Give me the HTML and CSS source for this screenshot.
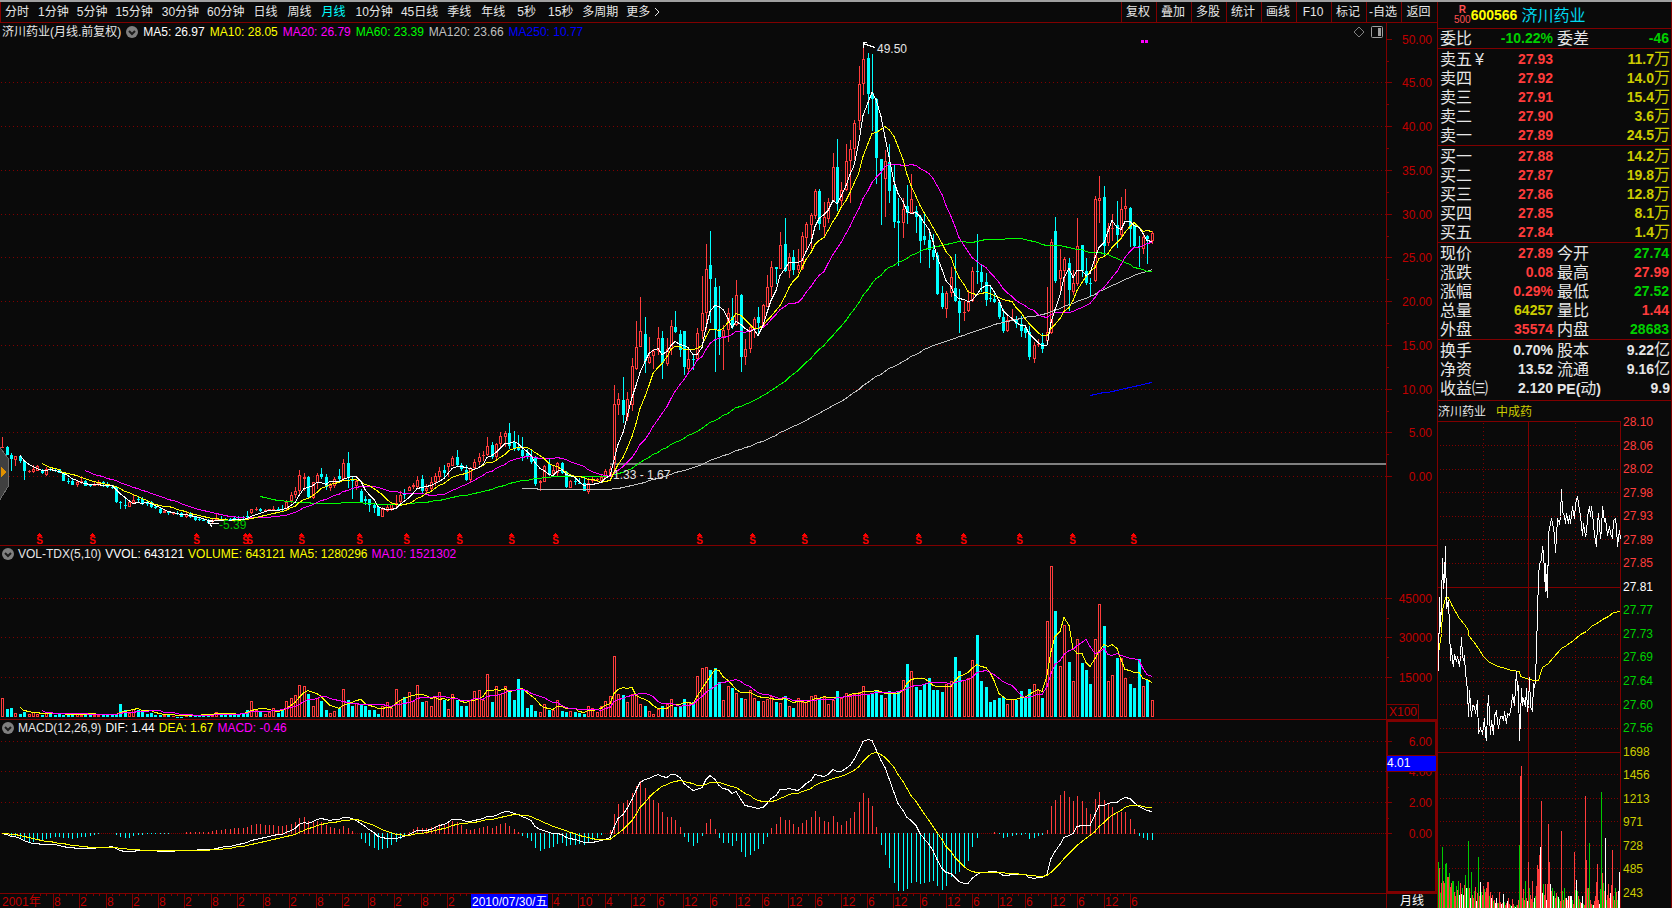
FILE: index.html
```html
<!DOCTYPE html>
<html lang="zh-CN">
<head>
<meta charset="utf-8">
<title>济川药业 600566 月线</title>
<link rel="stylesheet" href="styles.css">
</head>
<body>
<div class="app">
  <main class="main">
    <header class="toolbar">
      <nav class="periods" aria-label="周期">
        <button class="tab">分时</button>
        <button class="tab tab-tight">1分钟</button>
        <button class="tab tab-tight">5分钟</button>
        <button class="tab tab-tight">15分钟</button>
        <button class="tab tab-mid">30分钟</button>
        <button class="tab tab-tight">60分钟</button>
        <button class="tab">日线</button>
        <button class="tab">周线</button>
        <button class="tab tab-active">月线</button>
        <button class="tab tab-mid">10分钟</button>
        <button class="tab tab-tight">45日线</button>
        <button class="tab">季线</button>
        <button class="tab">年线</button>
        <button class="tab tab-wide">5秒</button>
        <button class="tab">15秒</button>
        <button class="tab tab-tight">多周期</button>
        <button class="tab tab-tight tab-more">更多
          <svg width="6" height="10" viewBox="0 0 6 10"><path d="M1 1l4 4-4 4" fill="none" stroke="currentColor"/></svg>
        </button>
      </nav>
      <nav class="tools" aria-label="工具">
        <button class="tool">复权</button>
        <button class="tool">叠加</button>
        <button class="tool">多股</button>
        <button class="tool">统计</button>
        <button class="tool">画线</button>
        <button class="tool">F10</button>
        <button class="tool">标记</button>
        <button class="tool">-自选</button>
        <button class="tool tool-last">返回</button>
      </nav>
    </header>

    <section class="pane pane-price">
      <svg class="plot" id="price" viewBox="0 23 1386 522" preserveAspectRatio="none"></svg>
      <svg class="scale" id="price-scale" viewBox="1386 23 51 522" preserveAspectRatio="none"></svg>
      <div class="legend">
        <span>济川药业(月线.前复权)</span>
        <button class="fold" aria-label="指标"><svg width="12" height="12" viewBox="0 0 12 12"><circle cx="6" cy="6" r="6" fill="#808080"/><path d="M3 5l3 3 3-3" fill="none" stroke="#1c1c1c" stroke-width="2"/></svg></button>
        <span class="white">MA5: 26.97</span>
        <span class="yellow">MA10: 28.05</span>
        <span class="magenta">MA20: 26.79</span>
        <span class="lime">MA60: 23.39</span>
        <span class="silver">MA120: 23.66</span>
        <span class="blue">MA250: 10.77</span>
      </div>
      <div class="pane-tools">
        <svg width="12" height="12" viewBox="0 0 12 12"><path d="M6 1l5 5-5 5-5-5z" fill="none" stroke="#808080"/></svg>
        <svg width="12" height="12" viewBox="0 0 12 12"><rect x=".5" y=".5" width="11" height="11" rx="1" fill="none" stroke="#a0a0a0"/><path d="M7 2h3v8H7z" fill="#a0a0a0"/></svg>
      </div>
    </section>

    <section class="pane pane-sub">
      <svg class="plot" id="volume" viewBox="0 546 1386 173" preserveAspectRatio="none"></svg>
      <svg class="scale" id="volume-scale" viewBox="1386 546 51 173" preserveAspectRatio="none"></svg>
      <div class="legend legend-sub">
        <button class="fold" aria-label="指标"><svg width="12" height="12" viewBox="0 0 12 12"><circle cx="6" cy="6" r="6" fill="#808080"/><path d="M3 5l3 3 3-3" fill="none" stroke="#1c1c1c" stroke-width="2"/></svg></button>
        <span>VOL-TDX(5,10)</span>
        <span class="white">VVOL: 643121</span>
        <span class="yellow">VOLUME: 643121</span>
        <span class="yellow">MA5: 1280296</span>
        <span class="magenta">MA10: 1521302</span>
      </div>
    </section>

    <section class="pane pane-sub">
      <svg class="plot" id="macd" viewBox="0 720 1386 173" preserveAspectRatio="none"></svg>
      <svg class="scale" id="macd-scale" viewBox="1386 720 51 173" preserveAspectRatio="none"></svg>
      <div class="legend legend-sub">
        <button class="fold" aria-label="指标"><svg width="12" height="12" viewBox="0 0 12 12"><circle cx="6" cy="6" r="6" fill="#808080"/><path d="M3 5l3 3 3-3" fill="none" stroke="#1c1c1c" stroke-width="2"/></svg></button>
        <span>MACD(12,26,9)</span>
        <span class="white">DIF: 1.44</span>
        <span class="yellow">DEA: 1.67</span>
        <span class="magenta">MACD: -0.46</span>
      </div>
    </section>

    <footer class="timeline">
      <svg class="plot" id="dates" viewBox="0 894 1386 14" preserveAspectRatio="none"></svg>
      <div class="cycle">月线</div>
    </footer>
  </main>

  <aside class="quote">
    <h1 class="title">
      <span class="badge"><b>R</b><span>500</span></span>
      <span class="code">600566</span>
      <span class="name">济川药业</span>
    </h1>
    <dl class="rows rows-single">
      <div class="cell"><dt>委比</dt><dd class="green">-10.22%</dd></div><div class="cell"><dt>委差</dt><dd class="green">-46</dd></div>
    </dl>
    <table class="book">
      <tbody>
        <tr><th>卖五<span class="yen">¥</span></th><td class="red">27.93</td><td class="lots">11.7<i>万</i></td></tr>
        <tr><th>卖四</th><td class="red">27.92</td><td class="lots">14.0<i>万</i></td></tr>
        <tr><th>卖三</th><td class="red">27.91</td><td class="lots">15.4<i>万</i></td></tr>
        <tr><th>卖二</th><td class="red">27.90</td><td class="lots">3.6<i>万</i></td></tr>
        <tr><th>卖一</th><td class="red">27.89</td><td class="lots">24.5<i>万</i></td></tr>
      </tbody>
    </table>
    <table class="book">
      <tbody>
        <tr><th>买一</th><td class="red">27.88</td><td class="lots">14.2<i>万</i></td></tr>
        <tr><th>买二</th><td class="red">27.87</td><td class="lots">19.8<i>万</i></td></tr>
        <tr><th>买三</th><td class="red">27.86</td><td class="lots">12.8<i>万</i></td></tr>
        <tr><th>买四</th><td class="red">27.85</td><td class="lots">8.1<i>万</i></td></tr>
        <tr><th>买五</th><td class="red">27.84</td><td class="lots">1.4<i>万</i></td></tr>
      </tbody>
    </table>
    <dl class="rows">
      <div class="cell"><dt>现价</dt><dd class="red">27.89</dd></div><div class="cell"><dt>今开</dt><dd class="green">27.74</dd></div>
      <div class="cell"><dt>涨跌</dt><dd class="red">0.08</dd></div><div class="cell"><dt>最高</dt><dd class="red">27.99</dd></div>
      <div class="cell"><dt>涨幅</dt><dd class="red">0.29%</dd></div><div class="cell"><dt>最低</dt><dd class="green">27.52</dd></div>
      <div class="cell"><dt>总量</dt><dd class="gold">64257</dd></div><div class="cell"><dt>量比</dt><dd class="red">1.44</dd></div>
      <div class="cell"><dt>外盘</dt><dd class="red">35574</dd></div><div class="cell"><dt>内盘</dt><dd class="green">28683</dd></div>
    </dl>
    <dl class="rows rows-last">
      <div class="cell"><dt>换手</dt><dd>0.70%</dd></div><div class="cell"><dt>股本</dt><dd>9.22<i>亿</i></dd></div>
      <div class="cell"><dt>净资</dt><dd>13.52</dd></div><div class="cell"><dt>流通</dt><dd>9.16<i>亿</i></dd></div>
      <div class="cell"><dt>收益㈢</dt><dd>2.120</dd></div><div class="cell"><dt><b class="pe">PE(</b>动<b class="pe">)</b></dt><dd>9.9</dd></div>
    </dl>
    <section class="intraday">
      <div class="intraday-head"><span>济川药业</span><span class="gold">中成药</span></div>
      <svg class="intraday-plot" id="intraday" viewBox="1438 421 183 487" preserveAspectRatio="none"></svg>
      <ol class="intraday-scale">
        <li class="red">28.10</li><li class="red">28.06</li><li class="red">28.02</li><li class="red">27.98</li><li class="red">27.93</li><li class="red">27.89</li><li class="red">27.85</li>
        <li class="white">27.81</li>
        <li class="green">27.77</li><li class="green">27.73</li><li class="green">27.69</li><li class="green">27.64</li><li class="green">27.60</li><li class="green">27.56</li>
        <li class="gold">1698</li><li class="gold">1456</li><li class="gold">1213</li><li class="gold">971</li><li class="gold">728</li><li class="gold">485</li><li class="gold">243</li>
      </ol>
    </section>
  </aside>
</div>
<script src="chart.js"></script>
</body>
</html>
```
FILE: styles.css
```css
* { box-sizing: border-box; }

body {
  margin: 0;
  background: #0a0a0a;
  color: #e6e6e6;
  font: 12px/14px "Liberation Sans", "Noto Sans CJK SC", sans-serif;
  overflow: hidden;
}

button {
  margin: 0;
  border: 0;
  background: none;
  color: inherit;
  font: inherit;
  white-space: nowrap;
}

.app {
  display: grid;
  grid-template-columns: minmax(0, 1fr) 235px;
  height: 100vh;
  border-top: 2px solid #a0a0a0;
}

.main { display: flex; flex-direction: column; min-width: 0; }

.toolbar {
  display: flex;
  justify-content: space-between;
  height: 21px;
  border-left: 1px solid #800000;
  border-bottom: 1px solid #800000;
}
.periods, .tools { display: flex; }
.tab { padding: 0 5px; }
.tab:first-child { padding-left: 4px; }
.tab-tight { padding: 0 4px; }
.tab-mid { padding: 0 4px 0 5px; }
.tab-wide { padding: 0 7px; }
.tab-active { color: #00ffff; }
.tab-more { display: flex; align-items: center; gap: 4px; }
.tool { width: 35px; padding: 0 2px 0 0; border-left: 1px solid #800000; }
.tool-last { width: 36px; }

.pane {
  position: relative;
  display: flex;
  min-height: 0;
  border-bottom: 1px solid #800000;
}
.pane-price { flex: 522 1 0; }
.pane-sub { flex: 173 1 0; }
.plot { display: block; flex: 1; min-width: 0; height: 100%; }
.scale { display: block; width: 51px; height: 100%; }

.legend {
  position: absolute;
  top: 2px;
  left: 2px;
  display: flex;
  align-items: center;
  gap: 5px;
  white-space: nowrap;
}
.legend-sub { top: 1px; gap: 4px; }
.fold { display: flex; padding: 0; }
.pane-tools {
  position: absolute;
  top: 3px;
  right: 54px;
  display: flex;
  gap: 6px;
}

.timeline { display: flex; height: 14px; }
.cycle {
  width: 51px;
  border-left: 1px solid #800000;
  color: #ffffff;
  text-align: center;
}

.white { color: #ffffff; }
.yellow { color: #ffff00; }
.magenta { color: #ff00ff; }
.lime { color: #00ff00; }
.silver { color: #c0c0c0; }
.blue { color: #0000ff; }
.red { color: #ff3c3c; }
.green { color: #00d000; }
.gold { color: #cccc00; }

.quote {
  display: flex;
  flex-direction: column;
  min-height: 0;
  border-left: 1px solid #800000;
  border-right: 1px solid #800000;
  font-size: 16px;
  line-height: 19px;
}
.title {
  display: flex;
  align-items: center;
  height: 27px;
  margin: 0;
  padding-left: 16px;
  border-bottom: 1px solid #800000;
  font-size: 16px;
  font-weight: normal;
}
.badge {
  display: flex;
  flex-direction: column;
  align-items: center;
  color: #ff5050;
  font-size: 10px;
  line-height: 10px;
}
.code { color: #ffff00; font-size: 14px; font-weight: bold; }
.name { margin-left: 4px; color: #00d8f0; }

.rows {
  display: grid;
  grid-template-columns: 113px 1fr;
  column-gap: 4px;
  margin: 0;
  padding: 1px 2px 0;
  border-bottom: 1px solid #800000;
}
.rows-single { padding-top: 0; }
.rows-last { padding: 1px 1px 2px 2px; }
.cell { display: flex; justify-content: space-between; height: 19px; white-space: nowrap; }
.cell dd { margin: 0; font-size: 14px; font-weight: bold; }
.quote i { font-size: 16px; font-style: normal; font-weight: normal; line-height: 16px; }
.pe { font-size: 14px; }

.book { display: block; padding: 1px 1px 0 2px; border-bottom: 1px solid #800000; }
.book tbody { display: block; }
.book tr { display: grid; grid-template-columns: 50px 63px 1fr; height: 19px; }
.book th { padding: 0; font-weight: normal; text-align: left; white-space: nowrap; }
.book td { padding: 0; font-size: 14px; font-weight: bold; text-align: right; white-space: nowrap; }
.book .lots { color: #cccc00; }
.yen { margin-left: 3px; }

.intraday {
  display: grid;
  grid-template: 20px minmax(0, 1fr) / minmax(0, 1fr) 50px;
  flex: 1;
  min-height: 0;
  font-size: 12px;
  line-height: 14px;
}
.intraday-head { display: flex; gap: 10px; padding: 4px 0 0; white-space: nowrap; }
.intraday-plot { grid-row: 2; display: block; width: 100%; height: 100%; }
.intraday-scale {
  grid-area: 1 / 2 / 3 / 3;
  display: flex;
  flex-direction: column;
  justify-content: space-between;
  margin: 0;
  padding: 14px 0 8px 2px;
  list-style: none;
}

svg text { font: 12px "Liberation Sans", "Noto Sans CJK SC", sans-serif; }
svg .dividend { font: bold 10px "Liberation Sans", sans-serif; }
```
FILE: chart.js
```js
const DARK = '#800000', LABEL = '#c00000', UP = '#ff3c3c', DOWN = '#00ffff';

/* Candles: direction, high, body top, body bottom, low; three units to a pixel, offset from `origin`. */
const blocks = [
  { origin: 420, rows: `r 52 80 84 84,c 78 82 104 104,c 98 104 118 152,r 108 108 120 138,c 104 108 122 130,c 120 124 152 180,r 150 154 156 158,r 135 148 156 160,r 134 138 152 152,c 148 152 158 162,
r 142 148 164 167,c 140 148 150 152,c 148 150 154 156,c 146 148 160 160,c 158 158 183 183,c 175 183 184 192,c 178 182 194 195,r 180 186 196 201,r 168 184 186 192,c 180 182 197 199,
c 192 195 199 202,r 184 191 197 198,r 180 188 192 197,c 184 187 193 200,c 186 191 200 203,c 197 201 203 208,c 199 200 246 249,c 244 247 250 266,c 238 254 258 266,r 247 247 260 260,
r 226 240 250 252,c 230 238 241 247,c 232 238 252 254,c 244 250 252 258,c 244 246 262 264,c 256 260 265 266,c 264 268 279 282,r 266 272 278 280,c 272 276 280 284,r 276 279 281 284,
c 272 280 283 284,c 276 280 290 291,r 277 282 292 294,c 276 280 290 294,c 290 292 300 303,c 294 298 300 302,c 296 299 300 302,c 297 300 308 312,r 297 300 306 310,r 281 296 298 300,
c 288 296 299 301,c 294 296 299 301,c 294 297 299 301,c 290 293 296 298,c 288 290 294 296,c 287 290 293 296,c 273 289 292 294,r 268 268 278 282,r 262 268 269 274,c 264 268 272 276,
r 268 270 272 276,r 266 268 271 274,r 258 267 270 272,c 262 266 269 272,c 254 266 268 272,r 240 246 268 270,r 216 226 244 250,r 200 214 226 234,r 150 166 214 228,r 160 172 176 212,
c 168 170 232 234,r 186 187 234 236,r 158 166 188 208,c 144 162 172 176,c 162 170 200 210,r 190 196 205 212,r 170 176 198 204,c 148 168 178 186,r 118 128 176 180,c 96 128 172 204,
c 172 180 184 237,r 178 184 198 210,c 208 212 246 248,c 228 238 244 254,c 236 238 254 276,c 252 256 264 280,c 262 262 288 288,r 262 268 290 292,r 256 262 272 276,r 246 252 268 272,
r 224 248 256 268,r 214 224 246 254,c 206 222 224 236,r 199 201 212 212,r 188 194 200 206,r 168 180 202 206,c 166 178 212 218,r 192 204 214 222,r 172 186 206 214,r 160 168 186 198,
r 142 152 170 184,c 136 150 158 170,r 128 130 142 172,r 108 114 138 138,c 90 112 136 140,c 130 136 148 154,c 136 150 180 184,r 140 144 180 186,r 118 126 144 150,r 100 110 126 136,
r 94 104 108 124,r 52 78 106 108,c 66 76 112 118,r 70 72 110 120,r 36 48 72 80,r 34 38 50 82,c 9 38 78 86,c 32 66 84 92,c 44 80 90 94,c 50 90 108 124,
c 88 100 112 116,c 86 108 126 132,c 108 112 192 198,r 180 184 190 212,r 134 138 186 186` },
  { origin: 260, rows: `c 598 612 644 648,r 618 630 642 650,r 606 610 640 648,c 606 608 638 642,c 632 636 682 684,r 660 664 684 684,c 648 662 667 676,c 655 668 670 672,c 654 668 692 694,r 654 668 696 702,
r 650 658 662 668,r 655 657 661 665,r 642 650 664 666,r 628 634 654 656,r 618 628 648 650,r 374 432 610 640,r 398 418 434 464,c 350 420 464 488,r 396 418 472 482,r 294 318 434 452,
r 182 262 328 330,r 110 214 260 262,c 170 222 304 338,r 230 290 310 312,r 268 274 288 326,r 200 234 274 284,c 212 234 308 356,r 234 266 312 318,r 180 198 266 286,c 152 202 216 218,
c 210 222 270 292,c 212 214 322 344,r 264 298 326 340,c 284 296 298 330,r 204 220 298 300` },
  { origin: 110, rows: `r 498 610 664 688,r 402 478 610 660,c 362 466 506 640,c 504 532 658 786,c 528 658 682 734,r 646 660 682 780,r 594 610 660 696,c 564 622 650 656,r 510 556 644 648,c 552 556 740 786,
r 688 716 742 764,r 642 652 716 730,r 620 626 656 684,c 592 622 640 676,r 582 586 648 650,r 494 532 590 590,r 454 472 532 560,c 470 472 476 522,r 366 404 476 478,c 324 402 482 486,
r 430 442 484 504,c 420 442 480 494,r 416 466 480 488,r 366 378 478 480,r 336 342 384 420,r 310 316 344 416,r 238 244 318 326,c 238 244 342 360,r 276 322 350 380,r 264 276 326 340,
r 128 172 274 276,c 86 170 280 302,r 216 240 274 292,r 102 154 240 244,r 90 116 154 278,r 30 38 116 150` },
  { origin: 30, rows: `r 108 162 272 300,r 44 88 162 196,c 68 84 192 252,c 72 190 206 302,c 204 206 384 462,c 388 388 422 584,r 360 394 446 560,c 342 396 482 518,c 404 464 576 594,c 504 574 578 708,
r 504 538 578 624,c 464 528 548 582,r 432 508 548 550,c 528 544 560 608,c 556 560 632 698,c 548 618 630 644,c 604 630 660 714,c 612 660 680 690,c 666 674 792 794,c 768 790 830 836,
r 784 790 836 864,r 710 742 788 802,c 672 774 814 816,c 776 814 848 908,r 812 846 850 872,r 780 816 842 846,r 712 724 814 816,c 612 722 725 762,c 704 726 756 786,c 730 756 810 828,
c 770 804 808 816,c 788 808 816 820,c 814 816 860 866,c 836 860 902 908,r 852 870 904 906,r 838 868 872 874,c 858 870 882 894,c 858 882 902 920,c 890 894 908 924,c 888 906 980 990,
r 936 946 986 1000,r 926 942 946 950,c 908 940 956 970,r 770 906 934 938,r 628 636 908 912,c 560 604 752 758,r 656 720 748 788,r 682 688 722 840,c 684 700 780 842,r 720 760 786 794,
r 564 648 762 768,c 646 646 722 740,c 684 724 758 766,c 744 758 762 802,r 498 508 754 756,r 438 504 514 578,c 468 502 648 682,r 578 594 640 648,r 552 594 598 632,c 514 584 614 654,
r 500 536 616 620,r 476 528 536 570,c 530 534 598 650,c 584 584 648 652,c 618 648 652 710,r 610 622 656 672,c 616 618 628 702,r 604 608 632 642` }
];
const candles = blocks.flatMap(b => b.rows.split(',').map(row => {
  const [dir, ...v] = row.trim().split(' ');
  const [high, top, bottom, low] = v.map(n => b.origin + n / 3);
  return { up: dir === 'r', high, top, bottom, low, close: dir === 'r' ? top : bottom };
}));

/* Volume bar heights, three units to a pixel. */
const volumes = `58 23 26 13 8 14 8 16 8 5 14 8 6 8 7 6 6 10 6 6 10 7 6 6 6 5 10 38 20 12 25 22 18 8 12 6 6 5 6 4 1 1 6 4 4 4 8 4 6 16 6 6 7 8 8 10 20 48 22 15
10 14 28 12 22 48 58 66 97 92 70 32 56 48 20 12 18 28 85 50 34 42 38 32 20 20 10 32 46 28 85 50 60 74 48 97 44 48 32 62 76 52 24 68 52 32 32 50 78 82 52 128 44 92 70 92 82 52 113 85
26 35 17 16 38 20 20 52 17 14 17 14 12 9 34 28 16 34 49 64 184 68 65 46 70 68 38 32 19 10 24 32 40 55 30 30 53 44 44 124 148 151 140 146 106 52 92 87 73 56 55 82 58 47 49 54 64 44 43 62
34 26 58 44 44 64 67 58 61 40 52 77 56 73 65 68 76 94 70 72 77 65 56 77 71 77 110 158 139 90 80 100 116 80 80 74 100 109 179 137 112 118 172 245 107 89 44 50 56 59 40 55 52 77 56 83 100 82 56 289
454 317 154 277 164 109 235 161 140 98 235 340 272 109 127 176 178 118 98 86 173 92 110 52`.split(/\s+/).map(n => n / 3);

const xAt = i => Math.round(2.3 + 4.37 * i);
const rect = (x, y, w, h, fill, stroke = 'none') =>
  `<rect x="${x}" y="${y}" width="${w}" height="${h}" fill="${fill}" stroke="${stroke}"/>`;
const line = (x1, y1, x2, y2, color, dash = '') =>
  `<path d="M${x1} ${y1}L${x2} ${y2}" stroke="${color}" fill="none"${dash ? ` stroke-dasharray="${dash}"` : ''}/>`;
const poly = (pts, color) =>
  `<polyline points="${pts.map(p => p.join(',')).join(' ')}" fill="none" stroke="${color}"/>`;
const label = (x, y, text, fill, anchor = 'start', cls = '') =>
  `<text x="${x}" y="${y}" fill="${fill}" text-anchor="${anchor}" class="${cls}">${text}</text>`;
const put = (id, parts) => {
  document.getElementById(id).innerHTML = `<g shape-rendering="crispEdges">${parts.join('')}</g>`;
};

const average = (values, n) => values
  .map((_, i) => i < n - 1 ? null : [xAt(i), values.slice(i - n + 1, i + 1).reduce((a, b) => a + b) / n])
  .filter(Boolean)
  .map(([x, y]) => [x, Math.round(y) + 0.5]);

const grid = ys => ys.map(y => line(1, y + 0.5, 1386, y + 0.5, DARK, '1 3'));

function bar(x, top, bottom, up) {
  const t = Math.round(top), h = Math.max(1, Math.round(bottom) - t);
  if (up && h > 2) return rect(x - 0.5, t + 0.5, 2, h - 1, '#0a0a0a', UP);
  return rect(x - 1, t, 3, h, up ? UP : DOWN);
}

function drawPrice() {
  const closes = candles.map(c => c.close);
  const out = grid([82, 126, 170, 214, 257, 301, 345, 389, 432, 476]);
  out.push(rect(610, 463, 776, 2, '#808080'));
  candles.forEach((c, i) => {
    const x = xAt(i), color = c.up ? UP : DOWN;
    out.push(line(x + 0.5, Math.round(c.high), x + 0.5, Math.round(c.low), color));
    out.push(bar(x, c.top, c.bottom, c.up));
  });
  [[250, '#0000ff'], [120, '#c0c0c0'], [60, '#00ff00'], [20, '#ff00ff'], [10, '#ffff00'], [5, '#ffffff']]
    .forEach(([n, color]) => out.push(poly(average(closes, n), color)));
  out.push(line(863, 43.5, 875, 47.5, '#fff'), line(863.5, 43, 863.5, 48, '#fff'), line(863, 42.5, 867, 42.5, '#fff'));
  out.push(label(877, 53, '49.50', '#e6e6e6'));
  out.push(line(208, 523.5, 219, 523.5, '#fff'), line(208, 521.5, 212, 527, '#fff'), line(208, 521.5, 213, 520.5, '#fff'));
  out.push(label(219, 529, '-5.39', '#00c800'));
  out.push(label(613, 479, '1.33 - 1.67', '#e6e6e6'));
  out.push(rect(1141, 40, 3, 3, '#ff00ff'), rect(1145, 40, 3, 3, '#ff00ff'));
  [39, 92, 196, 245, 249, 301, 359, 406, 459, 511, 555, 699, 752, 804, 865, 918, 963, 1019, 1072, 1133].forEach(x => {
    out.push(`<path d="M${x - 2} 536h5l-2.500-3z" fill="#ff0000"/>`);
    out.push(label(x + 0.5, 544, 'S', '#ff0000', 'middle', 'dividend'));
  });
  out.push('<path d="M-1 446L8.5 459V486L-1 501z" fill="#404040" stroke="#6c6c6c"/><path d="M1 467v10l5-5z" fill="#e09000"/>');
  put('price', out);
}

function drawVolume() {
  const out = grid([598, 637, 677]);
  volumes.forEach((v, i) => out.push(bar(xAt(i), 717 - v, 717, candles[i].up)));
  const tops = volumes.map(v => 716 - v);
  out.push(poly(average(tops, 5), '#ffff00'), poly(average(tops, 10), '#ff00ff'));
  put('volume', out);
}

function drawMacd() {
  const zero = 833, ratio = 1.76;
  const out = grid([741, 771, 802]);
  out.push(line(1, zero + 0.5, 1386, zero + 0.5, DARK, '1 1'));
  let fast = candles[0].close, slow = fast, dea = 0;
  const difs = [], deas = [];
  candles.forEach((c, i) => {
    fast += (c.close - fast) * 2 / 13;
    slow += (c.close - slow) * 2 / 27;
    const dif = (fast - slow) * ratio;
    dea += (dif - dea) * 2 / 10;
    const x = xAt(i), hist = Math.round(2 * (dif - dea));
    if (hist) out.push(line(x + 0.5, zero + (hist < 0 ? 1 : 0), x + 0.5, zero + hist, hist < 0 ? UP : DOWN));
    difs.push([x, Math.round(zero + dif) + 0.5]);
    deas.push([x, Math.round(zero + dea) + 0.5]);
  });
  out.push(poly(difs, '#ffffff'), poly(deas, '#ffff00'));
  put('macd', out);
}

function drawScales() {
  const scale = (items, minors, top, bottom) => [
    line(1386.5, top, 1386.5, bottom, DARK),
    ...items.flatMap(([y, text]) => [line(1387, y + 0.5, 1392, y + 0.5, DARK), label(1432, y + 5, text, LABEL, 'end')]),
    ...minors.map(y => line(1387, y + 0.5, 1389, y + 0.5, DARK))
  ];
  put('price-scale', scale(
    [39, 82, 126, 170, 214, 257, 301, 345, 389, 432, 476].map((y, i) => [y, (50 - 5 * i).toFixed(2)]),
    [61, 104, 148, 192, 236, 279, 323, 367, 411, 454], 23, 545));
  put('volume-scale', [
    ...scale([[598, '45000'], [637, '30000'], [677, '15000']], [618, 657], 546, 719),
    rect(1386.5, 704.5, 32, 16, 'none', DARK), label(1389, 716, 'X100', LABEL)
  ]);
  put('macd-scale', [
    ...scale([[741, '6.00'], [771, '4.00'], [802, '2.00'], [833, '0.00']], [787, 818], 720, 893),
    `<rect x="1387" y="721" width="49" height="171" fill="none" stroke="${DARK}" stroke-width="2"/>`,
    rect(1387, 755, 49, 17, '#0000ff'), line(1387, 755.5, 1437, 755.5, DARK), line(1387, 771.5, 1437, 771.5, DARK),
    label(1387, 767, '4.01', '#ffffff')
  ]);
}

function drawDates() {
  const out = [label(2, 906, '2001年', LABEL)];
  for (let k = 0; k <= 41; k++) {
    const x = Math.floor(53.6 + 26.26 * k);
    if (k < 16) out.push(line(x + 0.5, 894, x + 0.5, 908, DARK), label(x + 1, 906, k % 2 ? '2' : '8', LABEL));
    if (k > 18) {
      const text = { 19: '4', 20: '10', 21: '4' }[k] || (k % 2 ? '6' : '12');
      out.push(line(x + 0.5, 894, x + 0.5, 908, DARK), label(x + 1, 906, text, LABEL));
    }
    [-20, -13, -7].forEach(d => out.push(line(x + d + 0.5, 894, x + d + 0.5, 896, DARK)));
  }
  out.push(rect(471, 894, 77, 14, '#0000ff'), label(472, 906, '2010/07/30/五', '#ffffff'));
  put('dates', out);
}

const priceTrack = `175 815 178 592 181 680 184 610 187 475 190 565 193 535 196 438 199 625 205 600 208 680 211 780 214 745 217 780 220 800 224 763 228 785 232 770 237 800 241 765 244 712 247 765 250 780 253 765 256 820 260 840 262 870 265 950 268 870 271 915 274 950 277 915 283 918 286 940 292 900 295 1000 300 985 306 1000 312 955 315 1005 318 1020 322 935 325 885 328 950 331 1003 335 960 339 1003 342 945 348 935 352 965 356 985 360 950 366 950 370 960 373 935 378 970 382 940 387 945 390 930 395 915 398 882 402 915 406 860 409 815 412 870 416 855 418 1020 421 955 424 865 427 915 431 895 435 918 439 865 441 935 445 915 448 832 452 920 457 935 459 850 464 862 467 840 470 745 473 645 476 530 479 490 483 480 486 438 489 460 492 515 495 575 497 490 500 550 503 592 506 400 510 370 515 355 519 385 523 405 527 457 532 355 537 370 541 350 544 267 547 335 552 350 555 370 560 340 564 370 568 345 571 370 577 318 582 355 587 310 592 288 596 310 601 345 607 405 611 370 615 405 619 400 623 350 628 320 632 350 635 320 639 370 643 405 649 438 653 370 656 340 660 415 664 390 668 320 672 365 677 355 681 405 687 380 691 400 696 415 701 360 706 355 709 380 713 440 717 390 721 418`;
const averageTrack = `175 760 178 740 184 700 187 630 196 592 205 592 214 612 226 635 238 655 252 672 265 692 266 705 280 725 295 745 310 768 325 783 340 793 355 800 375 806 395 811 418 815 421 830 440 836 460 842 474 841 480 820 486 803 505 790 520 772 545 745 560 735 580 720 600 702 620 695 635 678 655 668 668 658 685 648 700 638 721 633`;

/* One entry per minute column: colour and height, three units to a pixel. */
const ticks = `g138 r120 g45 r75 g183 r82 r75 g132 g135 r93 r93 g105 r64 r75 g82 g80 r48 r35 g65 r55 g80 w40 r75 w42 g60 w40 r70 g100 w60 g60 g201 r60 w30 g108 r40 r30 g52 r62 w22 r45
g153 r36 w78 g48 r40 r66 g58 r48 r60 r79 r79 g36 r48 w30 r40 g20 r24 w14 w30 r16 g16 r48 r18 w12 r16 w42 g18 r8 r14 w20 r30 r12 g10 w6 r26 r12 g6 w4 g8 r10
r24 g188 r396 r426 g30 r56 r24 g81 r30 w20 r138 g60 r40 r26 r81 g18 w30 g36 r66 r129 r116 r159 w183 r321 w44 g72 r40 r72 w24 r72 r252 r138 w72 r50 g59 w36 g52 r30 r44 g36
w32 g28 r20 r231 g52 r24 g59 r30 w30 r24 w36 r36 w36 w36 g24 r12 r168 g54 w84 g50 r36 g26 r18 w14 w36 g12 r8 r336 r144 g60 r60 g195 r24 r12 g8 w8 r20 r36 r78 r132
r24 w12 g58 g348 r104 g74 r50 w210 g24 r40 r72 r30 w44 r69 r174 g36 r24 g59 r48 g24 w50 w108`.split(/\s+/);

function drawIntraday() {
  const third = n => 400 + n / 3;
  const solid = [64, 562, 1057], dotted = [136, 208, 277, 349, 418, 490, 631, 703, 772, 844, 913, 985, 1123, 1195, 1264, 1336, 1405, 1477];
  const out = [
    ...dotted.map(n => line(1440, Math.floor(third(n)) + 0.5, 1620, Math.floor(third(n)) + 0.5, DARK, '1 2')),
    ...solid.map(n => line(1438, Math.floor(third(n)) + 0.5, 1621, Math.floor(third(n)) + 0.5, DARK)),
    line(1483.5, 423, 1483.5, 908, DARK, '1 3'), line(1575.5, 423, 1575.5, 908, DARK, '1 3'),
    line(1528.5, 421, 1528.5, 908, DARK), line(1620.5, 421, 1620.5, 908, DARK)
  ];
  const colors = { r: '#ff3c3c', g: '#00c800', w: '#ffffff' };
  ticks.forEach((t, k) => {
    const h = Math.round(t.slice(1) / 3);
    out.push(rect(1438 + k, 908 - h, 1, h, colors[t[0]]));
  });
  const track = text => {
    const n = text.split(' ').map(Number), pts = [];
    for (let i = 0; i < n.length; i += 2) pts.push([Math.floor(1380 + n[i] / 3) + 0.5, Math.floor(third(n[i + 1])) + 0.5]);
    return pts;
  };
  out.push(poly(track(averageTrack), '#ffff00'), poly(track(priceTrack), '#ffffff'));
  put('intraday', out);
}

drawPrice();
drawVolume();
drawMacd();
drawScales();
drawDates();
drawIntraday();
```
